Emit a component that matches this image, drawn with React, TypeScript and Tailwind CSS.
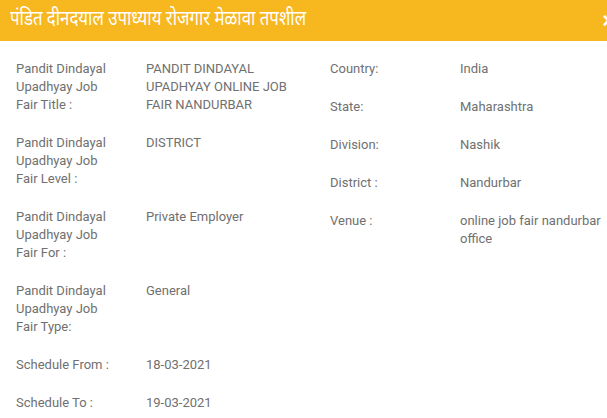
const left: [string, string][] = [
  ["Pandit Dindayal Upadhyay Job Fair Title :", "PANDIT DINDAYAL UPADHYAY ONLINE JOB FAIR NANDURBAR"],
  ["Pandit Dindayal Upadhyay Job Fair Level :", "DISTRICT"],
  ["Pandit Dindayal Upadhyay Job Fair For :", "Private Employer"],
  ["Pandit Dindayal Upadhyay Job Fair Type:", "General"],
  ["Schedule From :", "18-03-2021"],
  ["Schedule To :", "19-03-2021"],
];

const right: [string, string][] = [
  ["Country:", "India"],
  ["State:", "Maharashtra"],
  ["Division:", "Nashik"],
  ["District :", "Nandurbar"],
  ["Venue :", "online job fair nandurbar office"],
];

function Row({ label, value, valueWidth }: { label: string; value: string; valueWidth: string }) {
  return (
    <div className="mb-5 flex">
      <div className="w-[130px] shrink-0 pr-[30px]">{label}</div>
      <div className={valueWidth}>{value}</div>
    </div>
  );
}

export default function App() {
  return (
    <div className="h-[418px] w-[607px] overflow-hidden bg-white">
      <div className="flex h-[41px] items-center justify-between bg-[#f7b71f] pl-[10px] text-white">
        <h4 className="origin-left scale-x-[0.8] whitespace-nowrap text-[21px] leading-none font-normal [font-family:'Noto_Sans_Devanagari','Noto_Sans',sans-serif]">
          पंडित दीनदयाल उपाध्याय रोजगार मेळावा तपशील
        </h4>
        <span className="-mr-[8px] text-[22px] leading-none font-bold [font-family:'Liberation_Sans',sans-serif]">×</span>
      </div>

      <div className="flex pt-[19px] pl-4 text-[13px] leading-[18px] text-[#707070] [font-family:Roboto,sans-serif]">
        <div className="w-[314px] shrink-0">
          {left.map(([l, v]) => (
            <Row key={l} label={l} value={v} valueWidth="w-[160px]" />
          ))}
        </div>
        <div className="flex-1">
          {right.map(([l, v]) => (
            <Row key={l} label={l} value={v} valueWidth="flex-1" />
          ))}
        </div>
      </div>
    </div>
  );
}
